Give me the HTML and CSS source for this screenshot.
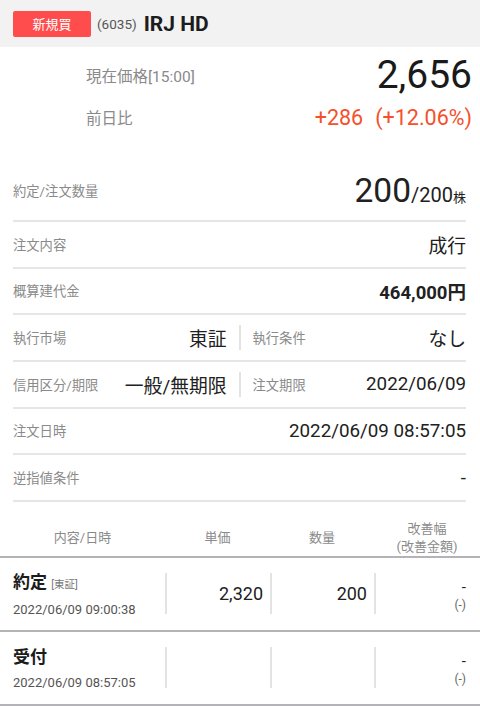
FILE: index.html
```html
<!DOCTYPE html>
<html lang="ja">
<head>
<meta charset="utf-8">
<link rel="stylesheet" href="styles.css">
</head>
<body>
<header class="top">
  <span class="badge">新規買</span>
  <span class="code">(6035)</span>
  <span class="name">IRJ HD</span>
</header>

<section class="price">
  <div class="price-row">
    <span class="plabel">現在価格[15:00]</span>
    <span class="now">2,656</span>
  </div>
  <div class="price-row">
    <span class="plabel">前日比</span>
    <span class="diff"><span>+286</span><span>(+12.06%)</span></span>
  </div>
</section>

<section class="list">
  <div class="row qty">
    <span class="label">約定/注文数量</span>
    <span class="qval"><span class="big">200</span><span class="mid">/200</span><span class="unit">株</span></span>
  </div>
  <div class="row">
    <span class="label">注文内容</span>
    <span class="val">成行</span>
  </div>
  <div class="row">
    <span class="label">概算建代金</span>
    <span class="val bold">464,000円</span>
  </div>
  <div class="row split">
    <div class="half">
      <span class="label">執行市場</span>
      <span class="val">東証</span>
    </div>
    <div class="vdiv"></div>
    <div class="half right">
      <span class="label">執行条件</span>
      <span class="val">なし</span>
    </div>
  </div>
  <div class="row split">
    <div class="half">
      <span class="label">信用区分/期限</span>
      <span class="val">一般/無期限</span>
    </div>
    <div class="vdiv"></div>
    <div class="half right">
      <span class="label">注文期限</span>
      <span class="val">2022/06/09</span>
    </div>
  </div>
  <div class="row">
    <span class="label">注文日時</span>
    <span class="val">2022/06/09 08:57:05</span>
  </div>
  <div class="row">
    <span class="label">逆指値条件</span>
    <span class="val">-</span>
  </div>
</section>

<section class="table">
  <div class="thead">
    <span>内容/日時</span>
    <span>単価</span>
    <span>数量</span>
    <span>改善幅<br>(改善金額)</span>
  </div>
  <div class="trow">
    <div class="c1">
      <div class="ttl">約定 <small>[東証]</small></div>
      <div class="dt">2022/06/09 09:00:38</div>
    </div>
    <div class="cell">2,320</div>
    <div class="cell">200</div>
    <div class="cell last"><span class="dash">-</span><span class="paren">(-)</span></div>
  </div>
  <div class="trow">
    <div class="c1">
      <div class="ttl">受付</div>
      <div class="dt">2022/06/09 08:57:05</div>
    </div>
    <div class="cell"></div>
    <div class="cell"></div>
    <div class="cell last"><span class="dash">-</span><span class="paren">(-)</span></div>
  </div>
</section>
</body>
</html>
```

FILE: styles.css
```css
html, body {
  margin: 0;
  padding: 0;
  background: #ffffff;
}
body {
  font-family: Roboto, "Noto Sans CJK JP", sans-serif;
  color: #212121;
  width: 480px;
  overflow: hidden;
}

/* header */
.top {
  height: 47px;
  background: #f2f2f2;
  display: flex;
  align-items: center;
  padding-left: 13px;
  box-sizing: border-box;
}
.badge {
  width: 78px;
  height: 26px;
  background: #ff4c4c;
  color: #fff;
  border-radius: 2px;
  font-size: 13px;
  display: flex;
  align-items: center;
  justify-content: center;
  margin-right: 6px;
}
.code {
  font-size: 13.5px;
  color: #555;
  margin-right: 7px;
}
.name {
  font-size: 21px;
  font-weight: 700;
  color: #1c1c1c;
}

/* price */
.price {
  padding: 7px 8px 22px 86px;
  height: 113px;
  box-sizing: border-box;
}
.price-row {
  height: 42px;
  display: flex;
  align-items: center;
  justify-content: space-between;
}
.plabel {
  font-size: 15.5px;
  color: #8a8a8a;
}
.now {
  font-size: 39px;
  color: #1a1a1a;
  line-height: 1;
}
.diff {
  font-size: 21.5px;
  color: #f4502c;
  display: flex;
  gap: 12px;
}

/* list */
.list {
  padding: 0 14px 0 13px;
}
.row {
  height: 46.67px;
  box-sizing: border-box;
  border-bottom: 2px solid #e6e6e8;
  display: flex;
  align-items: center;
  justify-content: space-between;
}
.row.qty {
  height: 62px;
}
.label {
  font-size: 13.3px;
  color: #8a8a8a;
}
.val {
  font-size: 18.8px;
  color: #212121;
}
.val.bold {
  font-weight: 700;
  font-size: 18.5px;
}
.qval {
  display: flex;
  align-items: baseline;
}
.qval .big {
  font-size: 33.5px;
}
.qval .mid {
  font-size: 20px;
}
.qval .unit {
  font-size: 13px;
}
.row.split {
  display: grid;
  grid-template-columns: 1fr 2px 1fr;
  align-items: center;
}
.half {
  display: flex;
  align-items: center;
  justify-content: space-between;
  padding-right: 12px;
}
.half.right {
  padding-right: 0;
  padding-left: 12px;
}
.vdiv {
  height: 25px;
  background: #e3e3e3;
}

/* table */
.thead {
  margin-top: 14px;
  padding-top: 4px;
  height: 36px;
  border-bottom: 2px solid #b4b4b8;
  display: grid;
  grid-template-columns: 165px 105px 104px 1fr;
  align-items: center;
  text-align: center;
  font-size: 13px;
  line-height: 18px;
  color: #8a8a8a;
}
.trow {
  height: 74px;
  box-sizing: border-box;
  border-bottom: 2px solid #b4b4b8;
  display: grid;
  grid-template-columns: 165px 105px 104px 1fr;
  align-items: center;
}
.c1 {
  padding-left: 13px;
  padding-top: 1px;
}
.ttl {
  font-size: 17px;
  font-weight: 700;
  line-height: 29px;
  color: #1c1c1c;
}
.ttl small {
  font-size: 10.5px;
  font-weight: 400;
  color: #777;
}
.dt {
  font-size: 13px;
  line-height: 21px;
  color: #555;
}
.cell {
  height: 41px;
  border-left: 2px solid #e3e3e3;
  display: flex;
  align-items: center;
  justify-content: flex-end;
  padding-right: 7px;
  font-size: 18px;
  color: #212121;
}
.cell.last {
  flex-direction: column;
  align-items: flex-end;
  justify-content: center;
  padding-right: 14px;
  padding-top: 5px;
  box-sizing: border-box;
}
.dash {
  font-size: 15px;
  line-height: 18px;
}
.paren {
  font-size: 12px;
  line-height: 19px;
  color: #666;
}
```
